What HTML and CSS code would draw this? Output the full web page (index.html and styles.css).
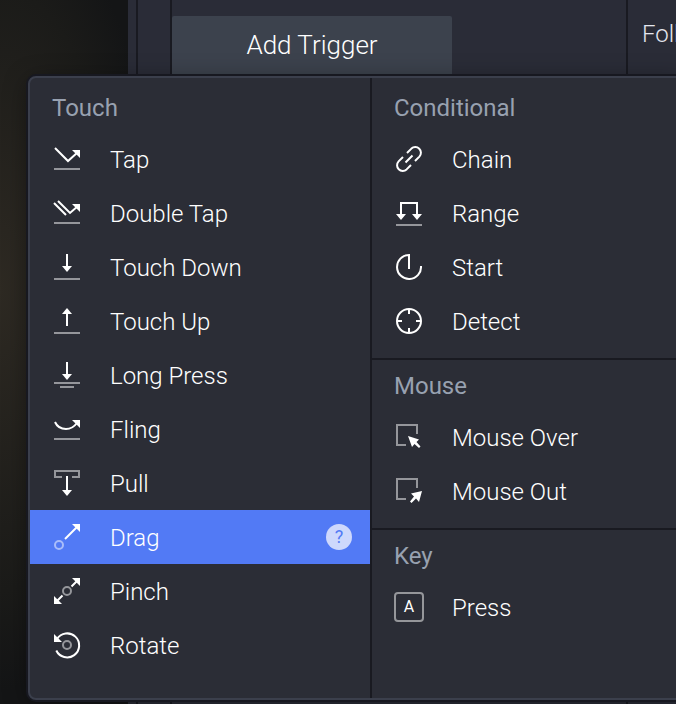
FILE: index.html
```
<!DOCTYPE html>
<html lang="en">
<head>
  <meta charset="UTF-8">
  <meta name="viewport" content="width=device-width, initial-scale=1.0">
  <title>Add Trigger</title>
  <link rel="stylesheet" href="styles.css">
</head>
<body>
  <div class="editor">
    <div class="canvas"></div>
    <div class="gutter"></div>
    <div class="ruler"></div>
    <main class="triggers">
      <button class="add-trigger" type="button">Add Trigger</button>
    </main>
    <aside class="properties">Foll</aside>
  </div>

  <div class="menu">
    <div class="column column-touch">
      <section class="group">
        <h2>Touch</h2>
        <button class="item" type="button">
          <svg class="icon" viewBox="0 0 30 30"><path class="dim" d="M2 25H28"/><path d="M3 4L16 17L26 8"/><path class="solid" d="M20 6H28V14Z"/></svg>
          <span class="label">Tap</span>
        </button>
        <button class="item" type="button">
          <svg class="icon" viewBox="0 0 30 30"><path class="dim" d="M2 25H28"/><path d="M2 5L14 17M6 3L18 15L26 8"/><path class="solid" d="M20 6H28V14Z"/></svg>
          <span class="label">Double Tap</span>
        </button>
        <button class="item" type="button">
          <svg class="icon" viewBox="0 0 30 30"><path class="dim" d="M2 27H28"/><path d="M15 2V15"/><path class="solid" d="M10 14H20L15 20Z"/></svg>
          <span class="label">Touch Down</span>
        </button>
        <button class="item" type="button">
          <svg class="icon" viewBox="0 0 30 30"><path class="dim" d="M2 27H28"/><path d="M15 7V20"/><path class="solid" d="M10 8H20L15 2Z"/></svg>
          <span class="label">Touch Up</span>
        </button>
        <button class="item" type="button">
          <svg class="icon" viewBox="0 0 30 30"><path class="dim" d="M2 23H28M8 27H22"/><path d="M15 2V15"/><path class="solid" d="M10 14H20L15 20Z"/></svg>
          <span class="label">Long Press</span>
        </button>
        <button class="item" type="button">
          <svg class="icon" viewBox="0 0 30 30"><path class="dim" d="M2 25H28"/><path d="M3 8C5 12.500 9 15 14 15C19 15 22 13 25 9"/><path class="solid" d="M20 6H28V14Z"/></svg>
          <span class="label">Fling</span>
        </button>
        <button class="item" type="button">
          <svg class="icon" viewBox="0 0 30 30"><path class="dim" d="M10 9H3V3H27V9H20"/><path d="M15 8V23"/><path class="solid" d="M10 22H20L15 28Z"/></svg>
          <span class="label">Pull</span>
        </button>
        <button class="item selected" type="button">
          <svg class="icon" viewBox="0 0 30 30"><circle class="dim" cx="7" cy="23" r="4"/><path d="M13 17L26 4"/><path class="solid" d="M20 2H28V10Z"/></svg>
          <span class="label">Drag</span>
          <span class="help">?</span>
        </button>
        <button class="item" type="button">
          <svg class="icon" viewBox="0 0 30 30"><circle class="dim" cx="15" cy="15" r="4"/><path d="M19.500 10.500L26 4M10.500 19.500L4 26"/><path class="solid" d="M20 2H28V10ZM2 20V28H10Z"/></svg>
          <span class="label">Pinch</span>
        </button>
        <button class="item" type="button">
          <svg class="icon" viewBox="0 0 30 30"><circle class="dim" cx="15" cy="15" r="4"/><path d="M5 9A12 12 0 1 1 4.300 20.500"/><path class="solid" d="M2 4V12H10Z"/></svg>
          <span class="label">Rotate</span>
        </button>
      </section>
    </div>

    <div class="column">
      <section class="group">
        <h2>Conditional</h2>
        <button class="item" type="button">
          <svg class="icon" viewBox="0 0 30 30"><path d="M13 9L17.400 4.600A5.660 5.660 0 0 1 25.400 12.600L21 17M17 21L12.600 25.400A5.660 5.660 0 0 1 4.600 17.400L9 13M11.500 18.500L18.500 11.500"/></svg>
          <span class="label">Chain</span>
        </button>
        <button class="item" type="button">
          <svg class="icon" viewBox="0 0 30 30"><path class="dim" d="M2 27H28"/><path d="M7 17V5H23V17"/><path class="solid" d="M2 16H12L7 22ZM18 16H28L23 22Z"/></svg>
          <span class="label">Range</span>
        </button>
        <button class="item" type="button">
          <svg class="icon" viewBox="0 0 30 30"><path d="M15 17V3A12 12 0 1 0 27 14"/></svg>
          <span class="label">Start</span>
        </button>
        <button class="item" type="button">
          <svg class="icon" viewBox="0 0 30 30"><circle cx="15" cy="15" r="12"/><path d="M15 3V8M15 22V27M3 15H8M22 15H27"/></svg>
          <span class="label">Detect</span>
        </button>
      </section>
      <section class="group">
        <h2>Mouse</h2>
        <button class="item" type="button">
          <svg class="icon" viewBox="0 0 30 30"><path class="dim" d="M12 23H3V3H23V12"/><path class="solid" d="M14 14L25 17.500L22.500 20L26.500 24.500L25 26L20.500 22L18 25Z"/></svg>
          <span class="label">Mouse Over</span>
        </button>
        <button class="item" type="button">
          <svg class="icon" viewBox="0 0 30 30"><path class="dim" d="M12 23H3V3H23V12"/><path class="solid" d="M28 15L17 17.500L20 20.500L16 25.500L17.500 27L22 22.500L25 26Z"/></svg>
          <span class="label">Mouse Out</span>
        </button>
      </section>
      <section class="group">
        <h2>Key</h2>
        <button class="item" type="button">
          <span class="key">A</span>
          <span class="label">Press</span>
        </button>
      </section>
    </div>
  </div>
</body>
</html>
```
FILE: styles.css
```
* {
  margin: 0;
  padding: 0;
  box-sizing: border-box;
}

body {
  font-family: Roboto, sans-serif;
  font-size: 24px;
  font-weight: 300;
  line-height: 30px;
  background: #2a2c37;
  color: #fff;
  overflow: hidden;
}

button {
  font: inherit;
  color: inherit;
  border: none;
  cursor: pointer;
}

/* editor behind the menu */
.editor {
  display: flex;
  height: 100vh;
}

.canvas {
  width: 128px;
  background: radial-gradient(ellipse 160px 400px at 0 290px, #2e2a23 0%, #1b1b19 75%, #141516 100%);
}

.gutter {
  width: 10px;
  border-right: 2px solid #191a21;
}

.ruler {
  width: 34px;
  border-right: 2px solid #191a21;
}

.triggers {
  flex: 1;
  padding-top: 16px;
}

.add-trigger {
  width: 280px;
  height: 72px;
  padding-bottom: 14px;
  background: #3c424d;
  border-radius: 2px;
  font-size: 26px;
}

.properties {
  width: 50px;
  padding: 19px 0 0 14px;
  border-left: 2px solid #191a21;
  color: #e4e6ee;
  white-space: nowrap;
  overflow: hidden;
}

/* trigger menu */
.menu {
  position: absolute;
  top: 76px;
  left: 28px;
  right: -10px;
  display: flex;
  background: #2b2d36;
  border: 2px solid #3b3f4c;
  border-radius: 8px;
  box-shadow: 0 0 0 2px #171820, 0 4px 24px rgba(0, 0, 0, 0.4);
}

.column {
  flex: 1;
}

.column-touch {
  flex: 0 0 342px;
  padding-bottom: 16px;
  border-right: 2px solid #191a21;
}

.group {
  padding-bottom: 10px;
}

.group:first-child {
  padding-top: 4px;
}

.group + .group {
  border-top: 2px solid #191a21;
}

.group h2 {
  padding: 11px 22px 9px;
  font-size: 24px;
  font-weight: 400;
  color: #98a1b0;
}

.item {
  display: flex;
  align-items: center;
  gap: 28px;
  width: 100%;
  height: 54px;
  padding: 0 18px 0 22px;
  background: none;
  text-align: left;
}

.item:hover,
.item.selected {
  background: #527af5;
}

.label {
  padding-top: 2px;
}

.icon {
  flex: none;
  width: 30px;
  height: 30px;
  fill: none;
  stroke: #fff;
  stroke-width: 2;
}

.icon .dim {
  stroke: rgba(255, 255, 255, 0.5);
}

.icon .solid {
  fill: #fff;
  stroke: none;
}

.help {
  width: 26px;
  margin-left: auto;
  border-radius: 50%;
  background: #ced8fc;
  color: #527af5;
  font-size: 18px;
  font-weight: 400;
  line-height: 26px;
  text-align: center;
}

.key {
  width: 30px;
  border: 2px solid #95969a;
  border-radius: 4px;
  font-size: 16px;
  font-weight: 400;
  line-height: 26px;
  text-align: center;
}
```
